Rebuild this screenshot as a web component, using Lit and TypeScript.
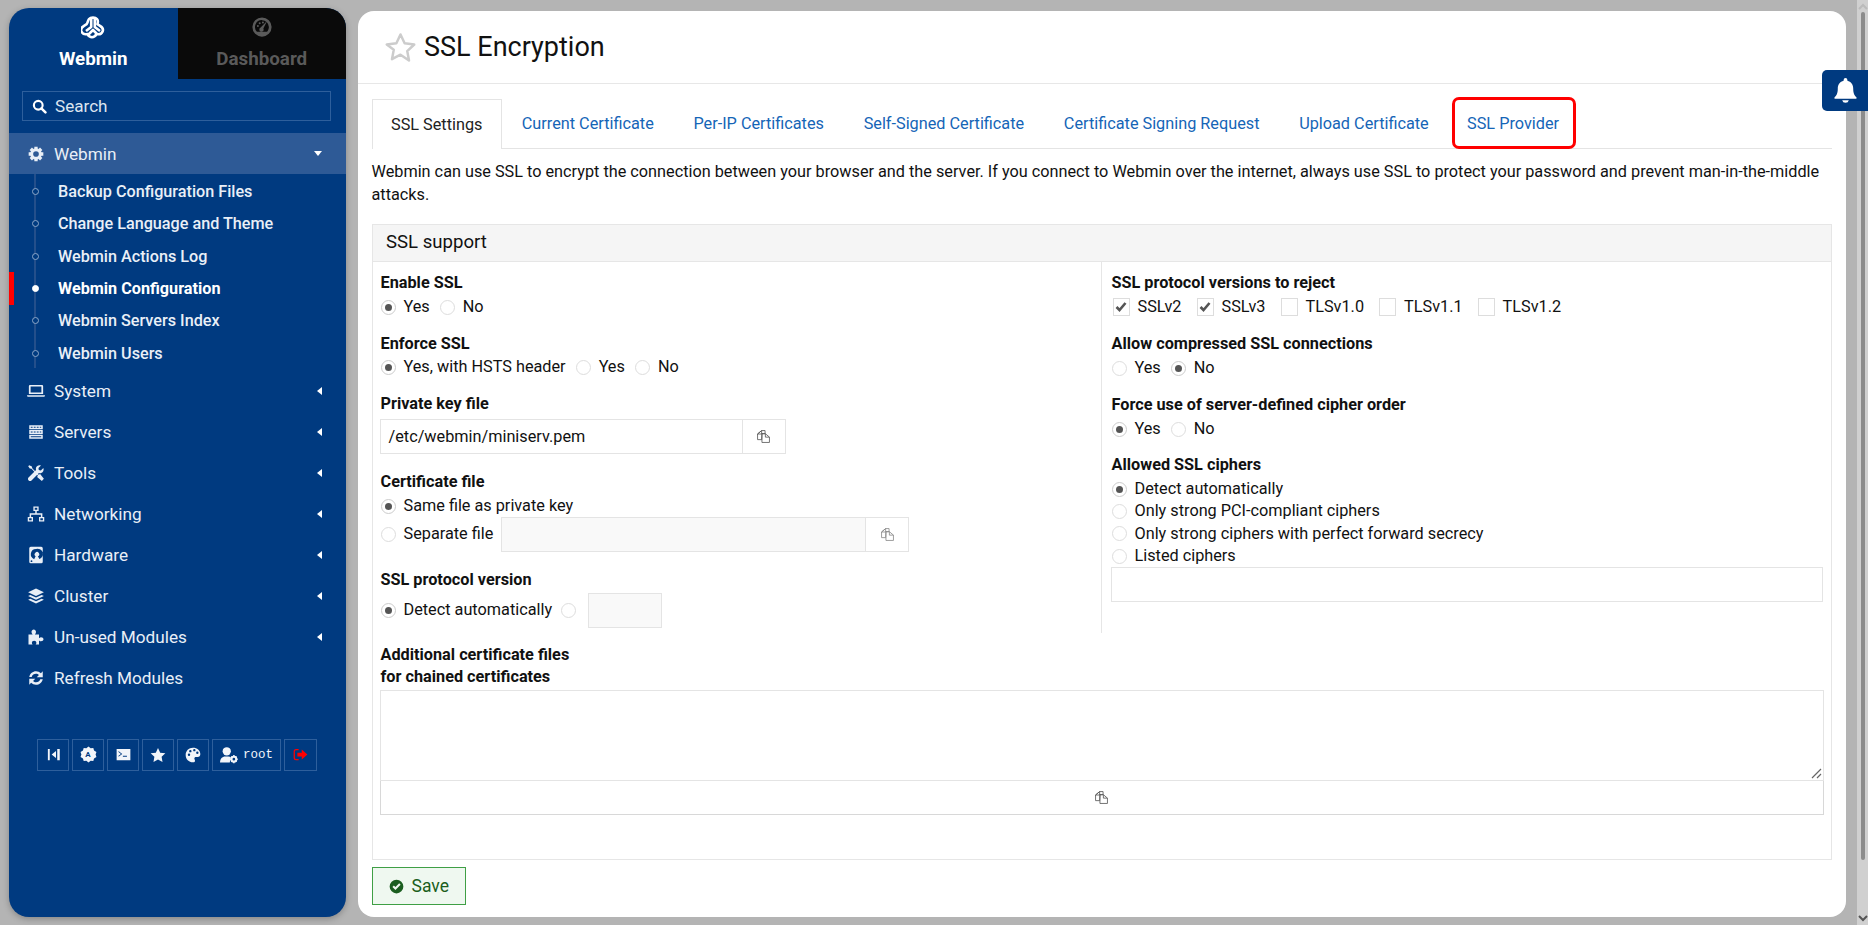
import { LitElement, css, html, svg } from 'lit';
import { customElement } from 'lit/decorators.js';

const ico = (body: unknown, size = 18, box = '0 0 24 24') =>
  html`<svg class="ico" width=${size} height=${size} viewBox=${box} fill="currentColor">${body}</svg>`;

const icons = {
  logo: svg`<g fill="none" stroke="currentColor" stroke-width="2.6" stroke-linejoin="round"><path d="M8 3c1.600-1.800 6.400-1.800 8 0 1.200 1.400 1 3.400.4 5.200l2.600 1.600c2 1.200 3.600 3.200 2.600 5.600-1 2.400-3.600 3.200-6 2.600-1.200 2-2.800 3.200-4.600 3.200s-3.400-1.200-4.600-3.200c-2.400.6-5-.2-6-2.600-1-2.400.6-4.400 2.600-5.600l2.600-1.600C7 6.400 6.800 4.400 8 3z"/><path d="M10.200 3v8L5 15M13.800 3v8l5.200 4M7.500 18.500L12 14l4.500 4.500"/></g>`,
  gauge: svg`<path fill-rule="evenodd" d="M12 1.500a10.500 10.500 0 1 0 0 21 10.500 10.500 0 0 0 0-21zm0 3a7.500 7.500 0 0 1 7.500 7.500c0 2-.8 3.900-2 5.200H6.500a7.500 7.500 0 0 1 5.500-12.700z"/><path d="M17.500 5.500l-4 8a2.400 2.400 0 1 1-3-1z"/><circle cx="7.500" cy="11" r="1.100"/><circle cx="9.500" cy="8" r="1.100"/><circle cx="13" cy="7" r="1.100"/>`,
  search: svg`<circle cx="10" cy="10" r="7" fill="none" stroke="currentColor" stroke-width="3.400"/><path d="M15 15l6.500 6.500" stroke="currentColor" stroke-width="4" stroke-linecap="round"/>`,
  cog: svg`<circle cx="12" cy="12" r="6.500" fill="none" stroke="currentColor" stroke-width="4.500"/><g stroke="currentColor" stroke-width="5"><path d="M12 1v4M12 19v4M1 12h4M19 12h4M4.200 4.200l2.900 2.900M16.900 16.900l2.900 2.900M19.800 4.200l-2.900 2.900M7.100 16.900l-2.900 2.900"/></g>`,
  laptop: svg`<path fill-rule="evenodd" d="M4 4h16a1.500 1.500 0 0 1 1.500 1.500V16h-19V5.500A1.500 1.500 0 0 1 4 4zm.8 2v8h14.400V6z"/><path d="M0 17.500h24c0 1.300-.8 2.200-2 2.200H2c-1.200 0-2-.9-2-2.200z"/>`,
  server: svg`<path fill-rule="evenodd" d="M3 3h18v5.200H3zm0 6.400h18v5.200H3zm0 6.400h18V21H3zM5 5v1.200h2.500V5zm4 0v1.200h2.500V5zm4 0v1.200h2.500V5zm4 0v1.200h2V5zM5 11.400v1.200h2.500v-1.200zm4 0v1.200h2.500v-1.200zm4 0v1.200h2.500v-1.200zm4 0v1.200h2v-1.200zM5 17.800V19h14v-1.200z"/>`,
  tools: svg`<path d="M3 1.500l3.500 1.900.5 2.300 8.500 8.500 2-1 5 6.500-2.700 2.800-6.300-5.300 1-2L6 6.400l-2.300-.5L1.600 3z"/><path d="M21.800 5.200l-3.300 3.300-2.800-.4-.4-2.800L18.600 2c-2.600-1-5.800.1-6.600 3-.3 1.200-.2 2.200.1 3L2 18c-1 1-1 2.700.2 3.900 1.100 1 2.800 1.100 3.800.1L15.900 12c1 .3 2 .3 3 0 2.800-.9 3.900-4.200 2.900-6.800z"/>`,
  net: svg`<path d="M8.500 2h7v6h-7zM1 16h7v6H1zM16 16h7v6h-7z"/><path d="M11 8h2v3h7.500v5h-2v-3H5.500v3h-2v-5H11z"/><path fill="#003a80" d="M10.300 3.800h3.400v2.400h-3.400zM2.800 17.800h3.400v2.400H2.800zM17.800 17.800h3.400v2.400h-3.400z"/>`,
  hdd: svg`<path fill-rule="evenodd" d="M5 1h14a2 2 0 0 1 2 2v18a2 2 0 0 1-2 2H5a2 2 0 0 1-2-2V3a2 2 0 0 1 2-2zm7 3a7 7 0 0 0-2.500 13.500l2-4a3 3 0 1 1 3 .3l2 3.500A7 7 0 0 0 12 4zM6 19a1.200 1.200 0 1 0 0 2.400A1.200 1.200 0 0 0 6 19z"/>`,
  layers: svg`<path d="M12 2L1.500 7 12 12l10.500-5z"/><path d="M4.500 10.500L1.500 12 12 17l10.500-5-3-1.500L12 14z"/><path d="M4.500 15.500L1.500 17 12 22l10.500-5-3-1.500L12 19z"/>`,
  puzzle: svg`<path d="M2 8.500h5.500C6.500 7.200 6 6.300 6 5.200 6 3.300 7.400 2 9 2s3 1.300 3 3.200c0 1.100-.5 2-1.500 3.300H16v5c1-.8 1.900-1.100 2.700-1.100 1.800 0 3.300 1.100 3.300 2.600s-1.500 2.600-3.300 2.600c-.8 0-1.700-.3-2.700-1.100V22h-4.500c.7-1 1-1.700 1-2.500 0-1.300-1.200-2.500-3-2.500s-3 1.200-3 2.500c0 .8.300 1.500 1 2.500H2z"/>`,
  refresh: svg`<path d="M3 10.500C4 6 7.700 3 12 3c2.600 0 4.800 1 6.500 2.600L21 3v8h-8l2.900-2.900C14.900 7 13.500 6.400 12 6.400c-2.700 0-5 1.700-5.700 4.100z"/><path d="M21 13.500C20 18 16.300 21 12 21c-2.600 0-4.800-1-6.500-2.600L3 21v-8h8l-2.900 2.900C9.100 17 10.500 17.600 12 17.600c2.700 0 5-1.700 5.700-4.100z"/>`,
  collapse: svg`<path d="M3 3h3v18H3zM18 3h4v18h-4zM16 6.500v11L9 12z"/>`,
  badge: svg`<path d="M12 .8l3 2.400 3.800-.4 1 3.700 3.400 1.900L22 12l1.200 3.600-3.400 1.900-1 3.700-3.800-.4-3 2.400-3-2.400-3.800.4-1-3.700L.8 15.600 2 12 .8 8.400l3.400-1.900 1-3.700 3.800.4z"/>`,
  terminal: svg`<path fill-rule="evenodd" d="M1 3h22v18H1zm3 3.500v1.600L8 11l-4 3v1.700L10 11zM11 14v1.700h6.500V14z"/>`,
  star: svg`<path d="M12 1.500l3.300 7 7.700 1-5.600 5.300 1.400 7.700-6.800-3.700-6.800 3.700 1.400-7.700L1 9.500l7.700-1z"/>`,
  palette: svg`<path fill-rule="evenodd" d="M12 1C5.500 1 1 5.800 1 12s4.800 11 11 11c2 0 3-1.200 3-2.500 0-1.600-1-2-1-3.300 0-1.200 1-2.200 2.300-2.200H19c2.500 0 4-1.800 4-4.500C23 5 18 1 12 1zM6 13.500a1.800 1.800 0 1 1 0-3.600 1.800 1.800 0 0 1 0 3.600zm2-5.500a1.800 1.800 0 1 1 0-3.600A1.800 1.800 0 0 1 8 8zm6-1.500a1.800 1.800 0 1 1 0-3.600 1.800 1.800 0 0 1 0 3.600zm4.500 4a1.800 1.800 0 1 1 0-3.600 1.800 1.800 0 0 1 0 3.600z"/>`,
  usercog: svg`<circle cx="9" cy="7" r="5.500"/><path d="M0 22c0-5 3-8 7-8h4c1.500 0 2.600.4 3.500 1l-1.500 7z"/><circle cx="18.500" cy="17.500" r="3.200" fill="none" stroke="currentColor" stroke-width="2.800"/><path d="M18.500 12v2M18.500 21v2M13.500 17.500h2M21.500 17.500h2M15 14l1.400 1.400M20.600 19.600L22 21M22 14l-1.400 1.400M16.400 19.600L15 21" stroke="currentColor" stroke-width="2"/>`,
  signout: svg`<path d="M9 4H5a3 3 0 0 0-3 3v10a3 3 0 0 0 3 3h4" fill="none" stroke="currentColor" stroke-width="2"/><path d="M7 9h7V4l9 8-9 8v-5H7z"/>`,
  bell: svg`<path d="M12 0a1.800 1.800 0 0 0-1.800 1.800v.9C6.700 3.500 4.600 6.500 4.600 10c0 5-1.300 6.800-3 8.400-.6.600-.2 1.600.7 1.600h19.400c.9 0 1.300-1 .7-1.600-1.700-1.600-3-3.400-3-8.400 0-3.500-2.100-6.500-5.600-7.300v-.9A1.800 1.800 0 0 0 12 0z"/><path d="M8.800 21.300a3.300 3.300 0 0 0 6.400 0z"/>`,
  copy: svg`<g fill="none" stroke="currentColor" stroke-width="1.300" stroke-linejoin="round"><path d="M9 2.500h5.500v5H9.500L9 17H2.500V8z"/><path d="M9 2.500L2.500 8H9z"/><path d="M9.500 7.500h5.500l6.500 5.500v8.500h-12z"/><path d="M15 7.500V13h6.500"/></g>`,
  starO: svg`<path fill="none" stroke="currentColor" stroke-width="1.800" stroke-linejoin="round" d="M12 2.500l3 6.400 7 .9-5.100 4.800 1.300 6.900L12 17.200l-6.200 3.300 1.300-6.900L2 9.800l7-.9z"/>`,
  check: svg`<path fill-rule="evenodd" d="M12 1a11 11 0 1 0 0 22 11 11 0 0 0 0-22zm-1.700 16.500L5.500 12.700l2.300-2.300 2.500 2.500 6-6 2.300 2.300z"/>`,
};

const submenu = [
  'Backup Configuration Files',
  'Change Language and Theme',
  'Webmin Actions Log',
  'Webmin Configuration',
  'Webmin Servers Index',
  'Webmin Users',
];

const menu: [keyof typeof icons, string, boolean][] = [
  ['laptop', 'System', true],
  ['server', 'Servers', true],
  ['tools', 'Tools', true],
  ['net', 'Networking', true],
  ['hdd', 'Hardware', true],
  ['layers', 'Cluster', true],
  ['puzzle', 'Un-used Modules', true],
  ['refresh', 'Refresh Modules', false],
];

const tabs = [
  'Current Certificate',
  'Per-IP Certificates',
  'Self-Signed Certificate',
  'Certificate Signing Request',
  'Upload Certificate',
];

@customElement('app-root')
export class AppRoot extends LitElement {
  radio(label: string, on = false) {
    return html`<span class="opt"><i class="radio ${on ? 'on' : ''}"></i>${label}</span>`;
  }

  check(label: string, on = false) {
    return html`<span class="opt"><i class="box">${on ? html`<svg width="12" height="12" viewBox="0 0 12 12"><path d="M1.500 6l3 3 6-7" fill="none" stroke="#555" stroke-width="2.600"/></svg>` : ''}</i>${label}</span>`;
  }

  sidebar() {
    return html`
      <aside class="side">
        <div class="side-tabs">
          <div class="side-tab">${ico(icons.logo, 24)}<b>Webmin</b></div>
          <div class="side-tab dark">${ico(icons.gauge, 22)}<b>Dashboard</b></div>
        </div>
        <div class="search">${ico(icons.search, 15)}<span>Search</span></div>
        <div class="item open">${ico(icons.cog, 16)}<span>Webmin</span><i class="caret down"></i></div>
        <ul class="sub">
          ${submenu.map(
            (s) => html`<li class=${s === 'Webmin Configuration' ? 'current' : ''}><i></i><span>${s}</span></li>`,
          )}
        </ul>
        ${menu.map(
          ([ic, label, more]) => html`
            <div class="item">${ico(icons[ic], 18)}<span>${label}</span>${more ? html`<i class="caret"></i>` : ''}</div>
          `,
        )}
        <div class="tools">
          <a>${ico(icons.collapse, 15)}</a>
          <a class="badge">${ico(icons.badge, 17)}<em>A</em></a>
          <a>${ico(icons.terminal, 15)}</a>
          <a>${ico(icons.star, 16)}</a>
          <a>${ico(icons.palette, 16)}</a>
          <a class="user">${ico(icons.usercog, 18)}<span>root</span></a>
          <a class="out">${ico(icons.signout, 15)}</a>
        </div>
      </aside>
    `;
  }

  left() {
    return html`
      <div class="col left">
        <div class="f"><label>Enable SSL</label><div class="row">${this.radio('Yes', true)}${this.radio('No')}</div></div>
        <div class="f f2">
          <label>Enforce SSL</label>
          <div class="row">${this.radio('Yes, with HSTS header', true)}${this.radio('Yes')}${this.radio('No')}</div>
        </div>
        <div class="f f3">
          <label>Private key file</label>
          <div class="group key">
            <div class="inp">/etc/webmin/miniserv.pem</div>
            <div class="pick">${ico(icons.copy, 15)}</div>
          </div>
        </div>
        <div class="f f4">
          <label>Certificate file</label>
          <div class="row r2">${this.radio('Same file as private key', true)}</div>
          <div class="row r3">
            ${this.radio('Separate file')}
            <div class="group cert"><div class="inp off"></div><div class="pick faint">${ico(icons.copy, 15)}</div></div>
          </div>
        </div>
        <div class="f f5">
          <label>SSL protocol version</label>
          <div class="row r4">${this.radio('Detect automatically', true)}<i class="radio"></i><div class="inp off mini"></div></div>
        </div>
      </div>
    `;
  }

  right() {
    return html`
      <div class="col right">
        <div class="f">
          <label>SSL protocol versions to reject</label>
          <div class="row checks">
            ${this.check('SSLv2', true)}${this.check('SSLv3', true)}${this.check('TLSv1.0')}${this.check('TLSv1.1')}${this.check('TLSv1.2')}
          </div>
        </div>
        <div class="f f2"><label>Allow compressed SSL connections</label><div class="row">${this.radio('Yes')}${this.radio('No', true)}</div></div>
        <div class="f f2"><label>Force use of server-defined cipher order</label><div class="row">${this.radio('Yes', true)}${this.radio('No')}</div></div>
        <div class="f f6">
          <label>Allowed SSL ciphers</label>
          <div class="stack">
            ${this.radio('Detect automatically', true)}
            ${this.radio('Only strong PCI-compliant ciphers')}
            ${this.radio('Only strong ciphers with perfect forward secrecy')}
            ${this.radio('Listed ciphers')}
          </div>
          <div class="inp wide"></div>
        </div>
      </div>
    `;
  }

  render() {
    return html`
      ${this.sidebar()}
      <main class="main">
        <header class="head">${ico(icons.starO, 33)}<h1>SSL Encryption</h1></header>
        <div class="body">
          <nav class="tabs">
            <a class="active">SSL Settings</a>
            ${tabs.map((t) => html`<a>${t}</a>`)}
            <a class="marked">SSL Provider</a>
          </nav>
          <p class="intro">
            Webmin can use SSL to encrypt the connection between your browser and the server. If you connect to Webmin
            over the internet, always use SSL to protect your password and prevent man-in-the-middle attacks.
          </p>
          <section class="panel">
            <h2>SSL support</h2>
            <div class="cols">${this.left()}${this.right()}</div>
            <div class="extra">
              <label>Additional certificate files<br />for chained certificates</label>
              <div class="area"><svg width="11" height="11" viewBox="0 0 11 11"><path d="M1 10l9-9M6 10l4-4" stroke="#666" stroke-width="1.200"/></svg></div>
              <div class="area-btn">${ico(icons.copy, 15)}</div>
            </div>
          </section>
          <button class="save">${ico(icons.check, 15)}Save</button>
        </div>
      </main>
      <div class="bar">
        <svg class="up" width="10" height="7" viewBox="0 0 10 7"><path d="M1 6l4-4 4 4" fill="none" stroke="#bbb" stroke-width="2"/></svg>
        <div class="thumb"></div>
        <svg width="10" height="7" viewBox="0 0 10 7"><path d="M1 1l4 4 4-4" fill="none" stroke="#555" stroke-width="2"/></svg>
      </div>
      <button class="bell">${ico(icons.bell, 25)}</button>
    `;
  }

  static styles = css`
    :host {
      display: flex;
      position: relative;
      height: 925px;
      overflow: hidden;
      background: #b4b4b4;
      font-family: Roboto, sans-serif;
      font-size: 16.25px;
      color: #111;
    }

    .ico {
      flex: none;
      display: block;
    }

    /* Sidebar */
    .side {
      flex: none;
      width: 337px;
      height: 909px;
      margin: 8px 12px 0 9px;
      background: #003a80;
      border-radius: 20px;
      overflow: hidden;
      box-shadow: 0 2px 6px rgba(0, 0, 0, 0.25);
      color: #e9eff7;
    }

    .side-tabs {
      display: flex;
      height: 71px;
    }

    .side-tab {
      flex: 1;
      display: flex;
      flex-direction: column;
      align-items: center;
      padding-top: 8px;
      gap: 8px;
      color: #fff;
    }

    .side-tab b {
      font-size: 18.8px;
      font-weight: 700;
      line-height: 22px;
    }

    .side-tab.dark {
      gap: 10px;
      background: #0a0a0a;
      color: #5a5a5a;
    }

    .search {
      display: flex;
      align-items: center;
      gap: 8px;
      height: 30px;
      margin: 12px 15px 12px 13px;
      padding-left: 9px;
      border: 1px solid #2e5f9c;
      font-size: 17.1px;
      color: #dce5f0;
      box-sizing: border-box;
    }

    .search .ico {
      color: #fff;
    }

    .item {
      display: flex;
      align-items: center;
      height: 41px;
      padding: 0 24px 0 18px;
      font-size: 17.2px;
    }

    .item > .ico {
      width: 18px;
      margin-right: 9px;
    }

    .item span {
      flex: 1;
    }

    .item.open {
      background: #2e5a96;
    }

    .caret {
      width: 0;
      height: 0;
      border-style: solid;
      border-width: 4px 5px 4px 0;
      border-color: transparent #fff transparent transparent;
    }

    .caret.down {
      border-width: 5px 4px 0 4px;
      border-color: #fff transparent transparent transparent;
    }

    .sub {
      list-style: none;
      margin: 0;
      padding: 1.4px 0 0;
      position: relative;
      height: 196.5px;
      box-sizing: border-box;
    }

    .sub::before {
      content: '';
      position: absolute;
      left: 25px;
      top: 0;
      bottom: 3px;
      width: 2px;
      background: #244f8b;
    }

    .sub li {
      position: relative;
      display: flex;
      align-items: center;
      height: 32.3px;
      padding-left: 49px;
      font-size: 16.2px;
      font-weight: 500;
    }

    .sub li i {
      position: absolute;
      left: 22.5px;
      width: 7px;
      height: 7px;
      border-radius: 50%;
      background: #003a80;
      border: 1px solid #8da7c8;
      box-sizing: border-box;
    }

    .sub li.current {
      font-weight: 700;
      color: #fff;
    }

    .sub li.current i {
      background: #fff;
      border-color: #fff;
    }

    .sub li.current::before {
      content: '';
      position: absolute;
      left: 0;
      top: 0;
      bottom: 0;
      width: 5px;
      background: #f00;
    }

    .tools {
      display: flex;
      gap: 3px;
      margin: 40px 0 0 28px;
    }

    .tools a {
      position: relative;
      display: flex;
      align-items: center;
      justify-content: center;
      gap: 5px;
      box-sizing: border-box;
      width: 32px;
      height: 32px;
      border: 1px solid #2e5f9c;
      color: #f2f5fa;
    }

    .tools .user {
      width: 69px;
      font-family: 'Liberation Mono', monospace;
      font-size: 12.5px;
    }

    .tools .out {
      width: 33px;
      color: #f00;
    }

    .badge em {
      position: absolute;
      font: 700 8px Roboto, sans-serif;
      color: #003a80;
    }

    /* Main card */
    .main {
      flex: none;
      width: 1488px;
      height: 906px;
      margin-top: 11px;
      background: #fff;
      border-radius: 16px;
    }

    .head {
      display: flex;
      align-items: center;
      gap: 7px;
      height: 73px;
      padding-left: 26px;
      box-sizing: border-box;
      border-bottom: 1px solid #e7e7e7;
      color: #ccc;
    }

    h1 {
      margin: 0;
      font-size: 27px;
      font-weight: 400;
      color: #111;
    }

    .body {
      padding: 15px 14px 0 13.5px;
    }

    .tabs {
      display: flex;
      height: 50px;
      border-bottom: 1px solid #e4e4e4;
      box-sizing: border-box;
    }

    .tabs a {
      display: flex;
      align-items: center;
      padding: 0 19.85px;
      color: #1565b7;
      box-sizing: border-box;
    }

    .tabs .active {
      height: 50px;
      padding: 0 18.5px;
      color: #222;
      background: #fff;
      border: 1px solid #e4e4e4;
      border-bottom: 0;
    }

    .tabs .marked {
      height: 52px;
      margin: -2px 0 0 3.5px;
      padding: 0 14px 0 12px;
      border: 3px solid #f00;
      border-radius: 7px;
    }

    .intro {
      margin: 11px 0 0;
      line-height: 23px;
      color: #111;
    }

    .panel {
      margin-top: 18px;
      height: 636px;
      border: 1px solid #e6e6e6;
      box-sizing: border-box;
    }

    h2 {
      margin: 0;
      height: 37px;
      padding-left: 13.5px;
      font-size: 18.6px;
      font-weight: 400;
      line-height: 35px;
      background: #f5f5f5;
      border-bottom: 1px solid #e6e6e6;
      box-sizing: border-box;
    }

    .cols {
      display: flex;
      height: 371px;
    }

    .col {
      box-sizing: border-box;
      padding-top: 11px;
    }

    .col.left {
      width: 729px;
      padding-left: 7px;
      border-right: 1px solid #e6e6e6;
    }

    .col.right {
      flex: 1;
      padding: 11px 8px 0 9px;
    }

    label {
      display: block;
      padding-left: 1px;
      font-weight: 700;
      line-height: 20px;
      color: #111;
    }

    .f2 {
      margin-top: 17px;
    }

    .f3 {
      margin-top: 17px;
    }

    .left .f2 .row {
      margin-top: 3px;
    }

    .f4 {
      margin-top: 18px;
    }

    .f5 {
      margin-top: 19px;
    }

    .f6 {
      margin-top: 16px;
    }

    .row {
      display: flex;
      align-items: center;
      gap: 10px;
      height: 20px;
      margin-top: 4px;
    }

    .row > .opt:first-child,
    .stack {
      margin-left: 1px;
    }

    .row.checks {
      gap: 15px;
    }

    .row.checks > .opt:first-child {
      margin-left: 2px;
    }

    .row.r2 {
      margin-top: 4px;
    }

    .row.r3 {
      height: 34px;
      margin-top: 1px;
      gap: 8px;
    }

    .row.r4 {
      height: 34px;
      margin-top: 3px;
      gap: 9px;
    }

    .opt {
      display: inline-flex;
      align-items: center;
      gap: 8px;
      line-height: 20px;
      white-space: nowrap;
    }

    .radio {
      flex: none;
      position: relative;
      width: 13px;
      height: 13px;
      border: 1px solid #ddd;
      border-radius: 50%;
      background: #fff;
    }

    .radio.on {
      border-color: #ccc;
    }

    .radio.on::after {
      content: '';
      position: absolute;
      inset: 3px;
      border-radius: 50%;
      background: #555;
    }

    .box {
      flex: none;
      display: flex;
      align-items: center;
      justify-content: center;
      width: 15px;
      height: 16px;
      border: 1px solid #ddd;
    }

    .group {
      display: flex;
      height: 35px;
    }

    .group.key {
      width: 406px;
      margin-top: 5px;
    }

    .group.cert {
      width: 408px;
    }

    .inp {
      flex: 1;
      box-sizing: border-box;
      height: 35px;
      padding: 0 8px;
      line-height: 33px;
      border: 1px solid #e4e4e4;
    }

    .inp.off {
      background: #f9f9f9;
    }

    .inp.mini {
      flex: none;
      width: 74px;
      margin-left: 3px;
    }

    .inp.wide {
      flex: none;
      margin-top: 1px;
    }

    .pick {
      flex: none;
      display: flex;
      align-items: center;
      justify-content: center;
      width: 44px;
      margin-left: -1px;
      border: 1px solid #e4e4e4;
      box-sizing: border-box;
      color: #555;
    }

    .pick.faint {
      color: #888;
    }

    .stack {
      display: flex;
      flex-direction: column;
      align-items: flex-start;
      margin-top: 4px;
      gap: 2.4px;
    }

    .extra {
      padding: 11px 7px 0;
    }

    .extra label {
      line-height: 22.4px;
    }

    .area {
      position: relative;
      height: 91px;
      margin-top: 1.5px;
      box-sizing: border-box;
      border: 1px solid #e4e4e4;
    }

    .area svg {
      position: absolute;
      right: 1px;
      bottom: 1px;
    }

    .area-btn {
      display: flex;
      align-items: center;
      justify-content: center;
      height: 35px;
      margin-top: -1px;
      box-sizing: border-box;
      border: 1px solid #d8d8d8;
      color: #555;
    }

    .save {
      display: flex;
      align-items: center;
      gap: 8px;
      box-sizing: border-box;
      width: 94px;
      height: 38px;
      margin-top: 7px;
      padding: 0 0 0 16px;
      font: 17.5px Roboto, sans-serif;
      color: #1b5e20;
      background: #eff8f0;
      border: 1px solid #3f9f45;
    }

    /* Page scrollbar and the bell tab over it */
    .bar {
      flex: none;
      display: flex;
      flex-direction: column;
      align-items: center;
      box-sizing: border-box;
      width: 11px;
      margin-left: 11px;
      padding: 3px 0 3px;
      background: #d0d0d0;
    }

    .thumb {
      width: 4px;
      flex: 1;
      margin: 2px 0 55px;
      border-radius: 2px;
      background: #8c8c8c;
    }

    .bell {
      position: absolute;
      top: 70px;
      right: 0;
      display: flex;
      align-items: center;
      justify-content: center;
      width: 46px;
      height: 41px;
      padding: 0;
      border: 0;
      border-radius: 5px 0 0 5px;
      background: #003a80;
      color: #fff;
    }
  `;
}

declare global {
  interface HTMLElementTagNameMap {
    'app-root': AppRoot;
  }
}
